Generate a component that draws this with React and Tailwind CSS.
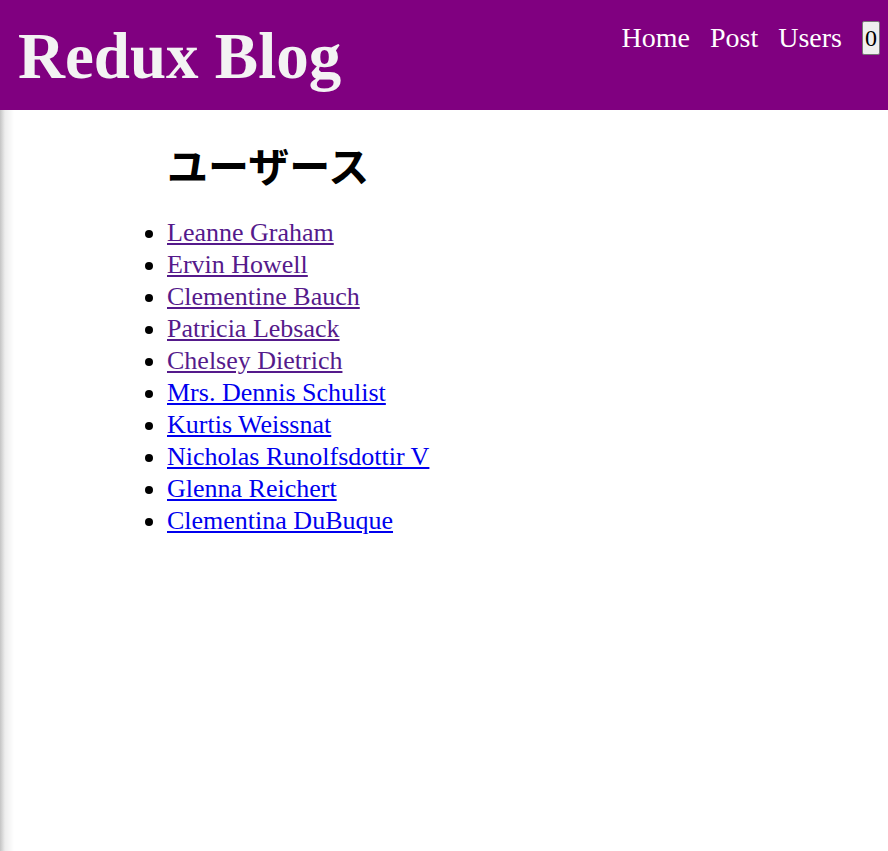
import React from 'react';

const users = [
  ['Leanne Graham', true],
  ['Ervin Howell', true],
  ['Clementine Bauch', true],
  ['Patricia Lebsack', true],
  ['Chelsey Dietrich', true],
  ['Mrs. Dennis Schulist', false],
  ['Kurtis Weissnat', false],
  ['Nicholas Runolfsdottir V', false],
  ['Glenna Reichert', false],
  ['Clementina DuBuque', false],
];

const App = () => {
  return (
    <div className="h-screen flex flex-col bg-white font-['Liberation_Serif',serif]">
      <header className="h-[110px] shrink-0 bg-[#800080] flex justify-between items-start pl-[18px] pr-2">
        <h1 className="mt-[16px] text-[65px] leading-[80px] font-bold text-[#f3f3f3]">Redux Blog</h1>
        <nav className="mt-[17px] flex items-center gap-[20px] text-[28px] text-white">
          <a href="#">Home</a>
          <a href="#">Post</a>
          <a href="#">Users</a>
          <button className="h-[34px] px-[2px] bg-[#efefef] border border-[#767676] rounded-[2px] text-black text-[24px] leading-none">
            0
          </button>
        </nav>
      </header>

      <main className="flex-1 bg-[linear-gradient(to_right,#c4c4c4,#ededed_5px,#fff_14px)] pl-[167px] pt-[28px]">
        <h2 className="mb-[27px] text-[41px] leading-[52px] font-bold text-black font-['Noto_Sans_CJK_JP',sans-serif]">
          ユーザース
        </h2>
        <ul className="list-disc text-[26px] leading-[32px]">
          {users.map(([name, visited]) => (
            <li key={name}>
              <a href="#" className={visited ? 'underline text-[#551a8b]' : 'underline text-[#0000ee]'}>
                {name}
              </a>
            </li>
          ))}
        </ul>
      </main>
    </div>
  );
};

export default App;
